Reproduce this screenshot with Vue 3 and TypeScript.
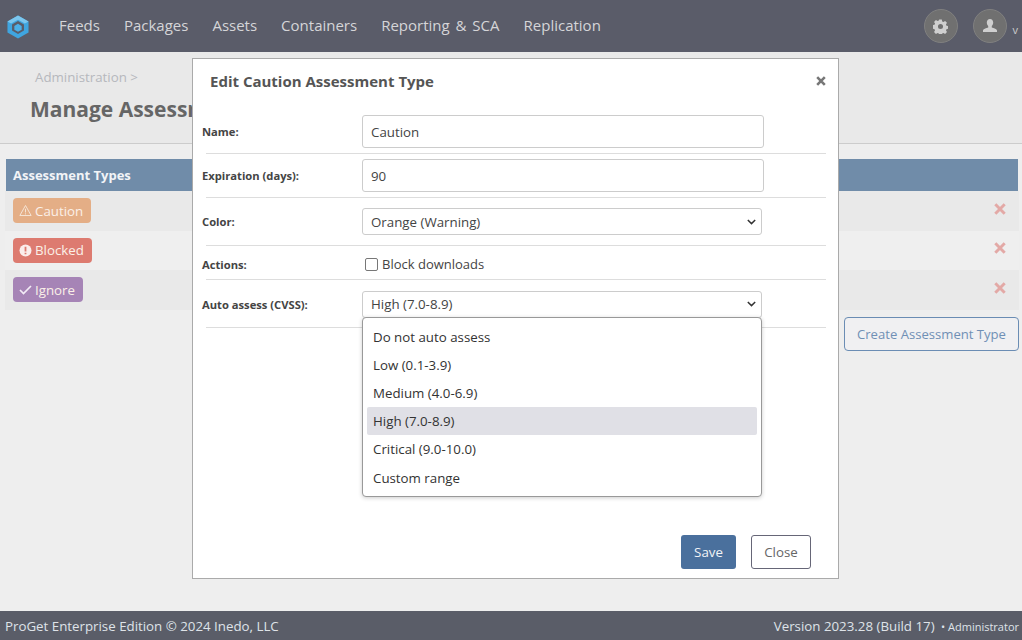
<script setup lang="ts">
const navItems = ['Feeds', 'Packages', 'Assets', 'Containers', 'Reporting & SCA', 'Replication']

interface AssessmentType {
  name: string
  color: string
  icon: 'warn' | 'block' | 'check'
}

const assessmentTypes: AssessmentType[] = [
  { name: 'Caution', color: 'orange', icon: 'warn' },
  { name: 'Blocked', color: 'red', icon: 'block' },
  { name: 'Ignore', color: 'purple', icon: 'check' },
]

const cvssOptions = [
  'Do not auto assess',
  'Low (0.1-3.9)',
  'Medium (4.0-6.9)',
  'High (7.0-8.9)',
  'Critical (9.0-10.0)',
  'Custom range',
]
</script>

<template>
  <div class="page">
    <header class="topbar">
      <svg class="logo" width="22" height="24" viewBox="0 0 24 26">
        <path d="M12 .5 23.500 7v12L12 25.500.5 19V7z" fill="#3fa5e0" />
        <path d="M12 .5 23.500 7 19.500 9.300 12 5 4.500 9.300.5 7z" fill="#7cc6ee" />
        <path d="M12 6.500 18.500 10.200v6.600L12 20.500l-6.500-3.700v-6.600z" fill="#5a5c69" />
        <path d="M12 9.500l4 2.300v4.200l-4 2.300-4-2.300v-4.200z" fill="#4cb0e8" />
      </svg>
      <nav class="nav">
        <a v-for="item in navItems" :key="item">{{ item }}</a>
      </nav>
      <div class="top-actions">
        <span class="round-btn">
          <svg width="15" height="15" viewBox="0 0 16 16">
            <path
              fill="#cfcfcf"
              fill-rule="evenodd"
              d="M6.600.6h2.800l.4 2 1.300.6 1.800-1.100 2 2-1.100 1.800.6 1.300 2 .4v2.800l-2 .4-.6 1.300 1.100 1.800-2 2-1.800-1.100-1.300.6-.4 2H6.600l-.4-2-1.300-.6-1.800 1.100-2-2 1.100-1.800-.6-1.300-2-.4V6.600l2-.4.6-1.300L1.100 3.100l2-2 1.800 1.100 1.300-.6zM8 5.300a2.700 2.700 0 1 0 0 5.400 2.700 2.700 0 0 0 0-5.400z"
            />
          </svg>
        </span>
        <span class="round-btn">
          <svg width="16" height="16" viewBox="0 0 16 16">
            <path
              fill="#cfcfcf"
              d="M8 1c2 0 3.200 1.500 3.200 3.600 0 1.500-.6 2.800-1.400 3.500v1.300c1.700.6 5.200 1.500 5.200 3.100V14H1v-1.500c0-1.600 3.500-2.500 5.200-3.100V8.100c-.8-.7-1.400-2-1.400-3.500C4.800 2.500 6 1 8 1z"
            />
          </svg>
        </span>
        <span class="caret">v</span>
      </div>
    </header>

    <main class="content">
      <section class="page-head">
        <div class="crumb">Administration &gt;</div>
        <h1>Manage Assessment Types</h1>
      </section>
      <section class="table-wrap">
        <div class="table-title">Assessment Types</div>
        <div v-for="t in assessmentTypes" :key="t.name" class="table-row">
          <span class="tag" :class="t.color">
            <svg v-if="t.icon === 'warn'" width="13" height="13" viewBox="0 0 15 14">
              <path d="M7.500 1.200 14 12.800H1z" fill="none" stroke="#f4e6d8" stroke-width="1.100" stroke-linejoin="round" />
              <path d="M7.500 5v4.300M7.500 10.300v1.200" stroke="#f4e6d8" stroke-width="1.100" />
            </svg>
            <svg v-else-if="t.icon === 'block'" width="13" height="13" viewBox="0 0 13 13">
              <circle cx="6.500" cy="6.500" r="6" fill="#fbeeec" />
              <path d="M6.500 2.800v4.600M6.500 8.700v1.500" stroke="#dd7b70" stroke-width="1.800" />
            </svg>
            <svg v-else width="13" height="13" viewBox="0 0 13 13">
              <path d="M1 7l3.500 3.500L12 3" fill="none" stroke="#f3ecf6" stroke-width="1.700" />
            </svg>
            {{ t.name }}
          </span>
          <svg class="del" width="12" height="12" viewBox="0 0 11 11">
            <path d="M1.200 1.200l8.600 8.600M9.800 1.200l-8.600 8.600" stroke="#e3a9a6" stroke-width="2.700" />
          </svg>
        </div>
        <div class="table-foot">
          <button class="create">Create Assessment Type</button>
        </div>
      </section>
    </main>

    <footer class="footer">
      <span>ProGet Enterprise Edition © 2024 Inedo, LLC</span>
      <span>Version 2023.28 (Build 17) <small>• Administrator</small></span>
    </footer>

    <div class="modal">
      <div class="modal-title">
        <h2>Edit Caution Assessment Type</h2>
        <svg width="10" height="10" viewBox="0 0 10 10">
          <path d="M1.200 1.200l7.600 7.600M8.800 1.200 1.200 8.800" stroke="#777" stroke-width="2.600" />
        </svg>
      </div>
      <div class="form">
        <div class="form-row first">
          <label>Name:</label>
          <div class="input">Caution</div>
        </div>
        <div class="form-row second">
          <label>Expiration (days):</label>
          <div class="input">90</div>
        </div>
        <div class="form-row third">
          <label>Color:</label>
          <div class="select">
            Orange (Warning)
            <svg width="9" height="6" viewBox="0 0 11 7">
              <path d="M1 1l4.500 4.500L10 1" fill="none" stroke="#333" stroke-width="1.800" />
            </svg>
          </div>
        </div>
        <div class="form-row fourth">
          <label>Actions:</label>
          <div class="check">
            <span class="box"></span>
            Block downloads
          </div>
        </div>
        <div class="form-row fifth">
          <label>Auto assess (CVSS):</label>
          <div class="select-wrap">
            <div class="select">
              High (7.0-8.9)
              <svg width="9" height="6" viewBox="0 0 11 7">
                <path d="M1 1l4.500 4.500L10 1" fill="none" stroke="#333" stroke-width="1.800" />
              </svg>
            </div>
            <ul class="menu">
              <li v-for="o in cvssOptions" :key="o" :class="{ active: o === 'High (7.0-8.9)' }">{{ o }}</li>
            </ul>
          </div>
        </div>
      </div>
      <div class="modal-actions">
        <button class="save">Save</button>
        <button class="close">Close</button>
      </div>
    </div>
  </div>
</template>

<style>
html,
body {
  margin: 0;
  background: #eee;
}
</style>

<style scoped>
.page {
  position: relative;
  width: 1022px;
  height: 640px;
  display: flex;
  flex-direction: column;
  overflow: hidden;
  font-family: 'Open Sans', 'Liberation Sans', sans-serif;
  font-size: 13.300px;
  color: #444;
  background: #eee;
}
.topbar {
  height: 52px;
  flex: none;
  display: flex;
  align-items: center;
  background: #5a5c69;
  padding: 0 4px 0 6px;
}
.logo {
  margin: 2px 30px 0 1px;
}
.nav {
  display: flex;
  gap: 24px;
  margin-top: -2px;
  font-size: 15px;
  word-spacing: 2px;
  color: #d5d5d8;
}
.top-actions {
  margin-left: auto;
  display: flex;
  align-items: center;
  gap: 15px;
}
.round-btn {
  width: 34px;
  height: 34px;
  box-sizing: border-box;
  border-radius: 50%;
  background: #707070;
  border: 1px solid #808080;
  display: flex;
  align-items: center;
  justify-content: center;
}
.caret {
  font-size: 11px;
  color: #ccc;
  margin: 6px 0 0 -9px;
}
.content {
  flex: 1;
}
.page-head {
  height: 92px;
  box-sizing: border-box;
  background: #e9e9e9;
  border-bottom: 1px solid #ccc;
  padding: 16px 0 0 30px;
}
.crumb {
  margin-left: 5px;
  color: #b6b8bd;
}
h1 {
  margin: 9px 0 0;
  font-size: 21px;
  font-weight: 700;
  color: #666;
}
.table-wrap {
  padding: 15px 3px 0 5px;
}
.table-title {
  height: 32px;
  margin: 0 1px;
  background: #708ca9;
  color: #f2f4f7;
  font-size: 13px;
  font-weight: 700;
  line-height: 32px;
  padding-left: 7px;
}
.table-row {
  height: 39.500px;
  display: flex;
  align-items: center;
  justify-content: space-between;
  padding: 0 13px 0 8px;
  background: #e9e9e9;
}
.table-row:nth-of-type(3) {
  background: #efefef;
}
.del {
  margin-bottom: 4px;
}
.tag {
  display: inline-flex;
  align-items: center;
  gap: 3px;
  height: 25px;
  padding: 0 8px 0 6px;
  border-radius: 4px;
  color: #fbf0e8;
}
.tag.orange {
  background: #e4ae86;
}
.tag.red {
  background: #dd7b70;
}
.tag.purple {
  background: #a684b6;
}
.table-foot {
  display: flex;
  justify-content: flex-end;
  margin-top: 7px;
}
.create {
  width: 175px;
  height: 34px;
  border: 1px solid #6b8db4;
  border-radius: 4px;
  background: #f0f0f2;
  color: #6f8fb5;
  font: inherit;
  font-size: 13.100px;
  padding: 1px 0 0;
}
.footer {
  height: 29px;
  flex: none;
  display: flex;
  align-items: center;
  justify-content: space-between;
  padding: 0 3px 0 5px;
  background: #5a5d68;
  color: #dfe3e8;
}
.footer small {
  font-size: 11px;
  margin-left: 3px;
}
.modal {
  position: absolute;
  left: 192px;
  top: 58px;
  width: 647px;
  height: 521px;
  box-sizing: border-box;
  border: 1px solid #aaa;
  background: #fff;
  display: flex;
  flex-direction: column;
}
.modal-title {
  height: 56px;
  box-sizing: border-box;
  flex: none;
  display: flex;
  align-items: center;
  justify-content: space-between;
  padding: 0 12px 12px 17px;
}
h2 {
  margin: 0;
  font-size: 15px;
  font-weight: 700;
  color: #555;
}
.form {
  margin: 0 12px 0 13px;
}
.form-row {
  display: grid;
  grid-template-columns: 156px 1fr;
  align-items: center;
  border-bottom: 1px solid #ddd;
}
.form-row label {
  margin-left: -4px;
  font-size: 11.200px;
  font-weight: 700;
  color: #444;
}
.form-row.first {
  padding-bottom: 5px;
}
.form-row.second {
  padding: 5px 0;
}
.form-row.third {
  padding: 10px 0;
}
.form-row.fourth {
  height: 34px;
  box-sizing: border-box;
  padding-top: 3px;
}
.form-row.fifth {
  padding: 11px 0 9px;
}
.input {
  width: 402px;
  height: 33px;
  box-sizing: border-box;
  border: 1px solid #ccc;
  border-radius: 3px;
  padding-left: 8px;
  line-height: 33px;
}
.select {
  width: 400px;
  height: 27px;
  box-sizing: border-box;
  border: 1px solid #ccc;
  border-radius: 3px;
  padding: 0 5px 0 8px;
  display: flex;
  align-items: center;
  justify-content: space-between;
}
.fifth .select {
  padding-bottom: 1px;
}
.select-wrap {
  position: relative;
}
.check {
  display: flex;
  align-items: center;
  gap: 4px;
  margin-left: 3px;
  font-size: 13px;
}
.box {
  width: 13px;
  height: 13px;
  box-sizing: border-box;
  border: 1.500px solid #777;
  border-radius: 2px;
}
.menu {
  position: absolute;
  left: 0;
  top: 26px;
  width: 400px;
  height: 180px;
  box-sizing: border-box;
  margin: 0;
  padding: 4.700px 4px;
  list-style: none;
  background: #fff;
  border: 1px solid #999;
  border-radius: 4px;
  box-shadow: 0 1px 4px rgba(0, 0, 0, 0.2);
}
.menu li {
  height: 28.200px;
  line-height: 28px;
  padding-left: 6px;
  border-radius: 2px;
  color: #333;
}
.menu li.active {
  background: #e0e0e6;
}
.modal-actions {
  margin-top: auto;
  display: flex;
  justify-content: flex-end;
  gap: 15px;
  padding: 0 27px 9px 0;
}
.modal-actions button {
  height: 34px;
  border-radius: 3px;
  font: inherit;
  padding: 0;
}
.save {
  width: 55px;
  border: none;
  background: #4a709d;
  color: #f2f4f7;
}
.close {
  width: 60px;
  border: 1px solid #667;
  background: #fff;
  color: #666;
}
</style>
